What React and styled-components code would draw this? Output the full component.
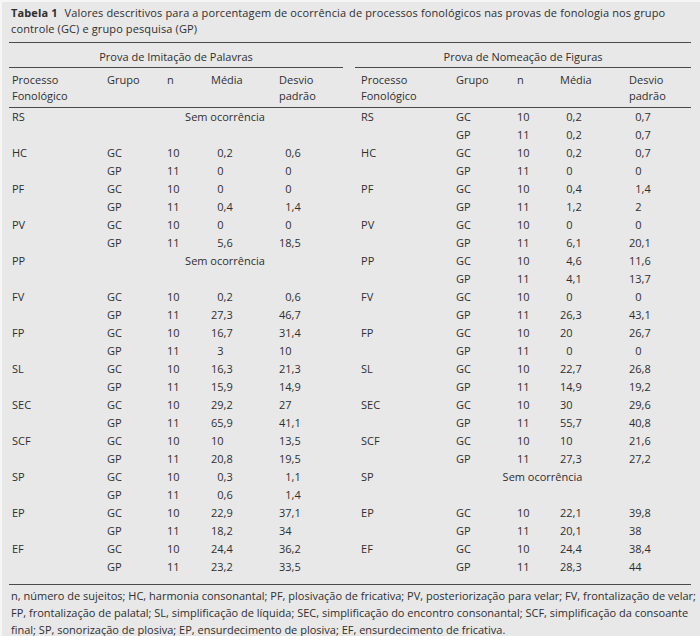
import React from "react";
import styled, { createGlobalStyle } from "styled-components";

const GlobalStyle = createGlobalStyle`
  html, body { margin: 0; padding: 0; background: #f4f4f4; }
  #root { width: 700px; }
`;

const Sheet = styled.div`
  box-sizing: border-box;
  width: 700px;
  height: 636px;
  background: #e8e8e8;
  border-top: 2px solid #f6f6f6;
  border-left: 2px solid #f6f6f6;
  font-family: "Open Sans", "Noto Sans", sans-serif;
  font-size: 11px;
  color: #2f2f2f;
  overflow: hidden;
`;

const Caption = styled.p`
  margin: 0;
  padding: 3px 8px 0 9px;
  height: 37px;
  line-height: 16px;
  letter-spacing: 0.12px;
  white-space: nowrap;
`;

const Label = styled.b`
  font-weight: 700;
  margin-right: 7px;
`;

const Table = styled.table`
  margin: 0 0 0 7px;
  width: 682px;
  table-layout: fixed;
  border-collapse: collapse;
  border-spacing: 0;
  border-top: 1px solid #4a4a4a;
  border-bottom: 1px solid #4a4a4a;
  font-size: 11px;
  line-height: 16px;
`;

const GroupHead = styled.th`
  font-weight: 400;
  text-align: center;
  padding: 6px 0 2px;
  border-bottom: 1px solid #4a4a4a;
`;

const Spacer = styled.th`
  padding: 0;
`;

const HeadRow = styled.tr`
  border-bottom: 1px solid #4a4a4a;
`;

const HeadCell = styled.th`
  font-weight: 400;
  text-align: left;
  vertical-align: top;
  padding: 4px 0 3px ${(p) => p.$pad || 0}px;
`;

const Cell = styled.td`
  height: 18px;
  line-height: 18px;
  padding: 0 0 0 ${(p) => p.$pad || 0}px;
  white-space: nowrap;
  text-align: ${(p) => (p.$center ? "center" : "left")};
  tr:last-child > & {
    padding-bottom: 8px;
  }
`;

const Int = styled.span`
  display: inline-block;
  width: 2ch;
  text-align: right;
`;

const Footnote = styled.p`
  margin: 0;
  padding: 2px 0 0 9px;
  line-height: 17px;
  font-size: 11px;
  white-space: nowrap;
`;

const left = [
  ["RS", null],
  [null, null],
  ["HC", ["GC", "10", "0,2", "0,6"]],
  [null, ["GP", "11", "0", "0"]],
  ["PF", ["GC", "10", "0", "0"]],
  [null, ["GP", "11", "0,4", "1,4"]],
  ["PV", ["GC", "10", "0", "0"]],
  [null, ["GP", "11", "5,6", "18,5"]],
  ["PP", null],
  [null, null],
  ["FV", ["GC", "10", "0,2", "0,6"]],
  [null, ["GP", "11", "27,3", "46,7"]],
  ["FP", ["GC", "10", "16,7", "31,4"]],
  [null, ["GP", "11", "3", "10"]],
  ["SL", ["GC", "10", "16,3", "21,3"]],
  [null, ["GP", "11", "15,9", "14,9"]],
  ["SEC", ["GC", "10", "29,2", "27"]],
  [null, ["GP", "11", "65,9", "41,1"]],
  ["SCF", ["GC", "10", "10", "13,5"]],
  [null, ["GP", "11", "20,8", "19,5"]],
  ["SP", ["GC", "10", "0,3", "1,1"]],
  [null, ["GP", "11", "0,6", "1,4"]],
  ["EP", ["GC", "10", "22,9", "37,1"]],
  [null, ["GP", "11", "18,2", "34"]],
  ["EF", ["GC", "10", "24,4", "36,2"]],
  [null, ["GP", "11", "23,2", "33,5"]],
];

const right = [
  ["RS", ["GC", "10", "0,2", "0,7"]],
  [null, ["GP", "11", "0,2", "0,7"]],
  ["HC", ["GC", "10", "0,2", "0,7"]],
  [null, ["GP", "11", "0", "0"]],
  ["PF", ["GC", "10", "0,4", "1,4"]],
  [null, ["GP", "11", "1,2", "2"]],
  ["PV", ["GC", "10", "0", "0"]],
  [null, ["GP", "11", "6,1", "20,1"]],
  ["PP", ["GC", "10", "4,6", "11,6"]],
  [null, ["GP", "11", "4,1", "13,7"]],
  ["FV", ["GC", "10", "0", "0"]],
  [null, ["GP", "11", "26,3", "43,1"]],
  ["FP", ["GC", "10", "20", "26,7"]],
  [null, ["GP", "11", "0", "0"]],
  ["SL", ["GC", "10", "22,7", "26,8"]],
  [null, ["GP", "11", "14,9", "19,2"]],
  ["SEC", ["GC", "10", "30", "29,6"]],
  [null, ["GP", "11", "55,7", "40,8"]],
  ["SCF", ["GC", "10", "10", "21,6"]],
  [null, ["GP", "11", "27,3", "27,2"]],
  ["SP", null],
  [null, null],
  ["EP", ["GC", "10", "22,1", "39,8"]],
  [null, ["GP", "11", "20,1", "38"]],
  ["EF", ["GC", "10", "24,4", "38,4"]],
  [null, ["GP", "11", "28,3", "44"]],
];

const Num = ({ v }) => {
  const [i, f] = v.split(",");
  return (
    <>
      <Int>{i}</Int>
      {f !== undefined ? "," + f : ""}
    </>
  );
};

const Side = ({ row, isRight }) => {
  const [proc, vals] = row;
  const pad = isRight ? 6 : 3;
  if (proc && !vals) {
    return (
      <>
        <Cell $pad={pad}>{proc}</Cell>
        {isRight ? (
          <>
            <Cell colSpan={3} $center>Sem ocorrência</Cell>
            <Cell />
          </>
        ) : (
          <Cell colSpan={4} $center>Sem ocorrência</Cell>
        )}
      </>
    );
  }
  if (!proc && !vals) {
    return (
      <>
        <Cell $pad={pad} />
        <Cell />
        <Cell />
        <Cell />
        <Cell />
      </>
    );
  }
  return (
    <>
      <Cell $pad={pad}>{proc || ""}</Cell>
      <Cell>{vals[0]}</Cell>
      <Cell>{vals[1]}</Cell>
      <Cell>
        <Num v={vals[2]} />
      </Cell>
      <Cell>
        <Num v={vals[3]} />
      </Cell>
    </>
  );
};

const widths = [98, 60, 44, 68, 64, 12, 101, 61, 43, 69, 62];

export default function App() {
  return (
    <>
      <GlobalStyle />
      <Sheet>
        <Caption>
          <Label>Tabela 1</Label>Valores descritivos para a porcentagem de ocorrência de processos fonológicos nas provas de fonologia nos grupo
          <br />
          controle (GC) e grupo pesquisa (GP)
        </Caption>
        <Table>
          <colgroup>
            {widths.map((w, i) => (
              <col key={i} style={{ width: w }} />
            ))}
          </colgroup>
          <thead>
            <tr>
              <GroupHead colSpan={5}>Prova de Imitação de Palavras</GroupHead>
              <Spacer />
              <GroupHead colSpan={5}>Prova de Nomeação de Figuras</GroupHead>
            </tr>
            <HeadRow>
              <HeadCell $pad={3}>Processo<br />Fonológico</HeadCell>
              <HeadCell>Grupo</HeadCell>
              <HeadCell>n</HeadCell>
              <HeadCell>Média</HeadCell>
              <HeadCell>Desvio<br />padrão</HeadCell>
              <HeadCell />
              <HeadCell $pad={6}>Processo<br />Fonológico</HeadCell>
              <HeadCell>Grupo</HeadCell>
              <HeadCell>n</HeadCell>
              <HeadCell>Média</HeadCell>
              <HeadCell>Desvio<br />padrão</HeadCell>
            </HeadRow>
          </thead>
          <tbody>
            {left.map((row, i) => (
              <tr key={i}>
                <Side row={row} />
                <Cell />
                <Side row={right[i]} isRight />
              </tr>
            ))}
          </tbody>
        </Table>
        <Footnote>
          n, número de sujeitos; HC, harmonia consonantal; PF, plosivação de fricativa; PV, posteriorização para velar; FV, frontalização de velar;
          <br />
          FP, frontalização de palatal; SL, simplificação de líquida; SEC, simplificação do encontro consonantal; SCF, simplificação da consoante
          <br />
          final; SP, sonorização de plosiva; EP, ensurdecimento de plosiva; EF, ensurdecimento de fricativa.
        </Footnote>
      </Sheet>
    </>
  );
}
